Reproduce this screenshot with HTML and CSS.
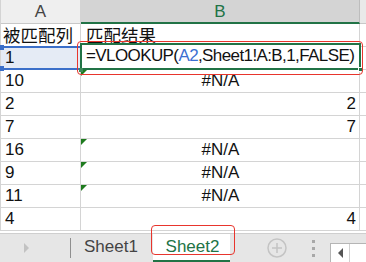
FILE: index.html
```html
<!DOCTYPE html>
<html>
<head>
<meta charset="utf-8">
<link rel="stylesheet" href="styles.css">
</head>
<body>
<div class="app">
  <div class="sheet">
    <div class="cell colhead">A</div>
    <div class="cell colhead sel">B</div>
    <div class="cell colhead last"></div>

    <div class="cell cjk">被匹配列</div>
    <div class="cell cjk">匹配结果</div>
    <div class="cell last"></div>

    <div class="cell num ref"><span class="corner tl"></span><span class="corner bl"></span>1</div>
    <div class="cell edit-host">
      <div class="editor"><span>=VLOOKUP(</span><span class="refc">A2</span><span>,Sheet1!A:B,1,FALSE)</span><span class="handle"></span><span class="handle-l"></span></div>
    </div>
    <div class="cell last"></div>

    <div class="cell num">10</div>
    <div class="cell num center flag">#N/A</div>
    <div class="cell last"></div>

    <div class="cell num">2</div>
    <div class="cell num right">2</div>
    <div class="cell last"></div>

    <div class="cell num">7</div>
    <div class="cell num right">7</div>
    <div class="cell last"></div>

    <div class="cell num">16</div>
    <div class="cell num center flag">#N/A</div>
    <div class="cell last"></div>

    <div class="cell num">9</div>
    <div class="cell num center flag">#N/A</div>
    <div class="cell last"></div>

    <div class="cell num">11</div>
    <div class="cell num center flag">#N/A</div>
    <div class="cell last"></div>

    <div class="cell num">4</div>
    <div class="cell num right">4</div>
    <div class="cell last"></div>
  </div>

  <div class="tabbar">
    <div class="nav"><span class="tri"></span></div>
    <div class="sep"></div>
    <div class="tab">Sheet1</div>
    <div class="tab active">Sheet2</div>
    <div class="plus">
      <svg width="20" height="20" viewBox="0 0 20 20"><circle cx="10" cy="10" r="9" fill="none" stroke="#c4c4c4" stroke-width="1.5"/><path d="M10 5v10M5 10h10" stroke="#c4c4c4" stroke-width="1.5"/></svg>
    </div>
    <div class="dots"><i></i><i></i><i></i></div>
    <div class="scroll"><div class="sbtn"><span class="ltri"></span></div><div class="strack"></div></div>
  </div>

  <div class="mark mark-formula"></div>
  <div class="mark mark-tab"></div>
</div>
</body>
</html>
```

FILE: styles.css
```css
* { box-sizing: border-box; }
html, body { margin: 0; padding: 0; background: #fff; }
body {
  width: 366px;
  height: 262px;
  overflow: hidden;
  font-family: "Liberation Sans", Arial, "Noto Sans CJK SC", sans-serif;
  color: #111;
}
.app { position: relative; width: 366px; height: 262px; }

.sheet {
  display: grid;
  grid-template-columns: 80px 279px 7px;
  grid-template-rows: 24px repeat(9, 23px);
  border-left: 1px solid #d4d4d4;
}
.cell {
  position: relative;
  border-right: 1px solid #d4d4d4;
  border-bottom: 1px solid #d4d4d4;
  display: flex;
  align-items: flex-end;
  padding: 0 3px 1px 3px;
  font-size: 17px;
  line-height: 20px;
  white-space: nowrap;
}
.cell.last { border-right: none; }

.colhead {
  background: #efefef;
  color: #444;
  justify-content: center;
  align-items: center;
  font-size: 17px;
  padding: 1px 0 0 0;
  border-bottom: 1px solid #c8c8c8;
}
.colhead.sel {
  background: #d4d4d4;
  color: #217346;
  border-bottom: 2px solid #217346;
  border-right: 1px solid #bdbdbd;
}
.colhead.last { background: #e9e9e9; }

.cjk {
  font-family: "Noto Sans CJK SC", sans-serif;
  font-size: 17.5px;
  line-height: 22px;
  padding: 0 0 0 2px;
  color: #111;
}
.cell.cjk + .cell.cjk { padding-left: 5px; }

.num { padding-left: 4px; }
.center { justify-content: center; }
.right { justify-content: flex-end; padding-right: 3px; }

.ref {
  background: #e5ebf5;
  border-top: 2px solid #3b6fc9;
  border-bottom: 2px solid #3b6fc9;
  margin-top: -1px;
  padding-bottom: 0;
}
.corner {
  position: absolute;
  left: -1px;
  width: 4px;
  height: 5px;
  background: #3b6fc9;
}
.corner.tl { top: -3px; }
.corner.bl { bottom: -3px; }

.flag::before {
  content: "";
  position: absolute;
  left: 0;
  top: 0;
  border-top: 6px solid #1e7b1e;
  border-right: 6px solid transparent;
}

.edit-host { padding: 0; overflow: visible; }
.editor {
  position: absolute;
  left: -1px;
  top: -4px;
  width: 281px;
  height: 27px;
  border: 2px solid #217346;
  background: #fff;
  display: flex;
  align-items: flex-end;
  padding: 0 0 2px 4px;
  font-size: 17px;
  letter-spacing: -0.6px;
  line-height: 20px;
  z-index: 2;
}
.refc { color: #3b6fd1; }
.handle {
  position: absolute;
  right: -4px;
  bottom: -4px;
  width: 5px;
  height: 5px;
  background: #217346;
  border: 1px solid #fff;
}
.handle-l {
  position: absolute;
  left: -3px;
  bottom: -4px;
  width: 4px;
  height: 4px;
  background: #3b8a5a;
}

.tabbar {
  margin-top: 2px;
  border-top: 1px solid #cfcfcf;
  height: 29px;
  background: #e6e6e6;
  display: flex;
  align-items: center;
}
.nav { width: 70px; height: 100%; display: flex; align-items: center; padding-left: 24px; }
.tri {
  width: 0; height: 0;
  border-left: 5px solid #c2c2c2;
  border-top: 5px solid transparent;
  border-bottom: 5px solid transparent;
}
.sep { width: 1px; height: 20px; background: #8f8f8f; }
.tab {
  height: 100%;
  display: flex;
  align-items: center;
  font-size: 17px;
  color: #444;
  padding: 0 0 2px 13px;
  width: 82px;
}
.tab.active {
  width: 77px;
  background: #fff;
  color: #217346;
  justify-content: center;
  padding: 0 0 0 2px;
  border-bottom: 2px solid #217346;
}
.plus { margin-left: 37px; height: 20px; }
.plus svg { display: block; }
.dots { margin-left: 25px; display: flex; flex-direction: column; gap: 4px; }
.dots i { display: block; width: 3px; height: 3px; background: #a8a8a8; }
.scroll {
  margin-left: 15px;
  align-self: flex-end;
  height: 19px;
  flex: 1;
  display: flex;
  background: #fff;
  border: 1px solid #b5b5b5;
  border-bottom: none;
  border-right: none;
}
.sbtn {
  width: 19px;
  border-right: 1px solid #d0d0d0;
  display: flex;
  align-items: center;
  justify-content: center;
}
.ltri {
  width: 0; height: 0;
  border-right: 5px solid #555;
  border-top: 5px solid transparent;
  border-bottom: 5px solid transparent;
}
.strack { flex: 1; }

.mark {
  position: absolute;
  border: 1.5px solid #e8352d;
  border-radius: 4px;
  z-index: 5;
  pointer-events: none;
}
.mark-formula { left: 77px; top: 41px; width: 286px; height: 34px; }
.mark-tab { left: 151px; top: 225px; width: 84px; height: 30px; }
```
